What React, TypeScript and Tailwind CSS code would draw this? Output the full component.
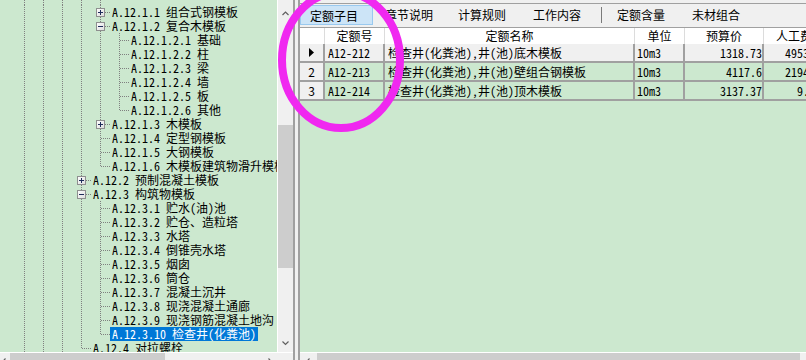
import React from "react";

const mono = "font-['Noto_Sans_Mono_CJK_SC','Noto_Sans_CJK_SC',monospace]";
const sans = "font-['Noto_Sans_CJK_SC','Microsoft_YaHei',sans-serif]";

const dotV =
  "bg-[image:repeating-linear-gradient(to_bottom,#808080_0px,#808080_1px,transparent_1px,transparent_2px)]";
const dotH =
  "bg-[image:repeating-linear-gradient(to_right,#808080_0px,#808080_1px,transparent_1px,transparent_2px)]";

type Node = {
  label: string;
  level: number;
  last?: boolean;
  box?: "+" | "-";
  selected?: boolean;
};

const nodes: Node[] = [
  { label: "A.12.1.1 组合式钢模板", level: 4, box: "+" },
  { label: "A.12.1.2 复合木模板", level: 4, box: "-" },
  { label: "A.12.1.2.1 基础", level: 5 },
  { label: "A.12.1.2.2 柱", level: 5 },
  { label: "A.12.1.2.3 梁", level: 5 },
  { label: "A.12.1.2.4 墙", level: 5 },
  { label: "A.12.1.2.5 板", level: 5 },
  { label: "A.12.1.2.6 其他", level: 5, last: true },
  { label: "A.12.1.3 木模板", level: 4, box: "+" },
  { label: "A.12.1.4 定型钢模板", level: 4 },
  { label: "A.12.1.5 大钢模板", level: 4 },
  { label: "A.12.1.6 木模板建筑物滑升模板", level: 4, last: true },
  { label: "A.12.2 预制混凝土模板", level: 3, box: "+" },
  { label: "A.12.3 构筑物模板", level: 3, box: "-" },
  { label: "A.12.3.1 贮水(油)池", level: 4 },
  { label: "A.12.3.2 贮仓、造粒塔", level: 4 },
  { label: "A.12.3.3 水塔", level: 4 },
  { label: "A.12.3.4 倒锥壳水塔", level: 4 },
  { label: "A.12.3.5 烟囱", level: 4 },
  { label: "A.12.3.6 筒仓", level: 4 },
  { label: "A.12.3.7 混凝土沉井", level: 4 },
  { label: "A.12.3.8 现浇混凝土通廊", level: 4 },
  { label: "A.12.3.9 现浇钢筋混凝土地沟", level: 4 },
  { label: "A.12.3.10 检查井(化粪池)", level: 4, last: true, selected: true },
  { label: "A.12.4 对拉螺栓", level: 3, last: true },
];

const rows = [
  { mark: "arrow", code: "A12-212", name: "检查井(化粪池),井(池)底木模板", unit: "10m3", price: "1318.73", labor: "4953.6" },
  { mark: "2", code: "A12-213", name: "检查井(化粪池),井(池)壁组合钢模板", unit: "10m3", price: "4117.6", labor: "2194.3" },
  { mark: "3", code: "A12-214", name: "检查井(化粪池),井(池)顶木模板", unit: "10m3", price: "3137.37", labor: "9.52" },
];

function ToggleBox({ sign }: { sign: "+" | "-" }) {
  return (
    <svg className="absolute left-[5px] top-[3px]" width="9" height="9" viewBox="0 0 9 9">
      <defs>
        <linearGradient id="tb" x1="0" y1="0" x2="1" y2="1">
          <stop offset="0" stopColor="#ffffff" />
          <stop offset="1" stopColor="#dcdcdc" />
        </linearGradient>
      </defs>
      <rect x="0.5" y="0.5" width="8" height="8" fill="url(#tb)" stroke="#8e8f8f" />
      <line x1="2" y1="4.5" x2="7" y2="4.5" stroke="#1e2b5a" />
      {sign === "+" && <line x1="4.5" y1="2" x2="4.5" y2="7" stroke="#1e2b5a" />}
    </svg>
  );
}

function Guides({ count }: { count: number }) {
  return (
    <>
      {Array.from({ length: count }).map((_, i) => (
        <div key={i} className="relative w-[19px] shrink-0">
          <div className={`absolute left-[9px] top-0 h-full w-px ${dotV}`} />
        </div>
      ))}
    </>
  );
}

function TreeRow({ node }: { node: Node }) {
  return (
    <div className="flex h-[14px] shrink-0">
      <div className="w-[15px] shrink-0" />
      <Guides count={node.level} />
      <div className="relative w-[19px] shrink-0">
        <div className={`absolute left-[9px] top-0 w-px ${node.last ? "h-[7px]" : "h-full"} ${dotV}`} />
        <div className={`absolute left-[10px] top-[7px] h-px w-[9px] ${dotH}`} />
        {node.box && <ToggleBox sign={node.box} />}
      </div>
      <span
        className={`whitespace-nowrap px-[2px] text-[12px] leading-[14px] ${
          node.selected ? "bg-[#0078d7] text-white" : "text-black"
        }`}
      >
        {node.label}
      </span>
    </div>
  );
}

function Chevron({ dir }: { dir: "up" | "down" | "left" | "right" }) {
  const vertical = dir === "up" || dir === "down";
  const pts = {
    up: "0.5,4 3.5,1 6.5,4",
    down: "0.5,0.5 3.5,3.5 6.5,0.5",
    left: "3.5,0.5 0.8,3.5 3.5,6.5",
    right: "0.5,0.5 3.2,3.5 0.5,6.5",
  }[dir];
  return (
    <svg width={vertical ? 7 : 4} height={vertical ? 5 : 7} className="shrink-0">
      <polyline points={pts} fill="none" stroke="#606060" strokeWidth="1.2" />
    </svg>
  );
}

function TreePanel() {
  return (
    <div className="flex w-[295px] shrink-0 flex-col border-r-2 border-[#a0a0a0]">
      <div className="flex h-[352px] shrink-0">
        <div className={`flex w-[278px] shrink-0 flex-col overflow-hidden border-r border-white bg-[#cce8cf] ${mono}`}>
          <div className="flex h-[5px] shrink-0">
            <div className="w-[15px] shrink-0" />
            <Guides count={5} />
          </div>
          {nodes.map((n) => (
            <TreeRow key={n.label} node={n} />
          ))}
        </div>
        <div className="flex w-[15px] shrink-0 flex-col items-center bg-[#f0f0f0]">
          <div className="mt-[11px]">
            <Chevron dir="up" />
          </div>
          <div className="mt-[109px] h-[143px] w-full bg-[#cdcdcd]" />
          <div className="mt-[73px]">
            <Chevron dir="down" />
          </div>
        </div>
      </div>
      <div className="flex h-[17px] shrink-0 border-t border-white bg-[#f0f0f0]">
        <div className="flex w-[278px] shrink-0 items-center">
          <div className="ml-[2px]">
            <Chevron dir="left" />
          </div>
          <div className="ml-[4px] h-full w-[155px] bg-[#cdcdcd]" />
          <div className="ml-auto mr-[6px]">
            <Chevron dir="right" />
          </div>
        </div>
      </div>
    </div>
  );
}

const tabs = ["章节说明", "计算规则", "工作内容"];

function TabBar() {
  return (
    <div className={`flex h-[24px] shrink-0 items-start border-t border-[#a0a0a0] text-[12px] text-black ${sans}`}>
      <div className="mt-[1px] h-[20px] w-[73px] shrink-0 border border-[#99c9ef] bg-[#cce4f7] pl-[9px] pt-[2px] leading-[16px]">
        定额子目
      </div>
      <div className="ml-[12px] mt-[1px] h-[20px] leading-[20px]">{tabs[0]}</div>
      <div className="ml-[25px] mt-[1px] h-[20px] leading-[20px]">{tabs[1]}</div>
      <div className="ml-[27px] mt-[1px] h-[20px] leading-[20px]">{tabs[2]}</div>
      <div className="ml-[20px] mt-[3px] h-[16px] w-px bg-[#7a7a7a]" />
      <div className="ml-[15px] mt-[1px] h-[20px] leading-[20px]">定额含量</div>
      <div className="ml-[27px] mt-[1px] h-[20px] leading-[20px]">未材组合</div>
    </div>
  );
}

function QuotaTable() {
  return (
    <div className="flex h-[325px] shrink-0 flex-col overflow-hidden border-t border-[#a0a0a0] bg-[#cce8cf]">
      <div className={`flex h-[16px] shrink-0 bg-white text-[12px] leading-[16px] text-black ${sans}`}>
        <div className="w-[25px] shrink-0 border-r border-[#dcdcdc]" />
        <div className="w-[60px] shrink-0 border-r border-[#dcdcdc] text-center">定额号</div>
        <div className="w-[250px] shrink-0 border-r border-[#dcdcdc] text-center">定额名称</div>
        <div className="w-[50px] shrink-0 border-r border-[#dcdcdc] text-center">单位</div>
        <div className="w-[79px] shrink-0 border-r border-[#dcdcdc] text-center">预算价</div>
        <div className="w-[60px] shrink-0 whitespace-nowrap text-center">人工费</div>
      </div>
      {rows.map((r, i) => {
        const bg = i === 0 ? "bg-[#f0f0f0]" : "bg-[#cce8cf]";
        return (
          <div
            key={r.code}
            className={`flex h-[19px] shrink-0 border-b-2 border-[#a0a0a0] text-[12px] leading-[17px] text-black ${mono}`}
          >
            <div className={`flex w-[25px] shrink-0 items-center justify-center border-r-2 border-[#a0a0a0] bg-[#f0f0f0] ${sans}`}>
              {r.mark === "arrow" ? (
                <svg width="5" height="9" viewBox="0 0 5 9">
                  <polygon points="0,0 5,4.5 0,9" fill="#000" />
                </svg>
              ) : (
                r.mark
              )}
            </div>
            <div className={`w-[60px] shrink-0 border-r-2 border-[#a0a0a0] pl-[3px] ${bg}`}>{r.code}</div>
            <div className={`w-[250px] shrink-0 whitespace-nowrap border-r-2 border-[#a0a0a0] pl-[3px] ${bg}`}>{r.name}</div>
            <div className={`w-[50px] shrink-0 border-r-2 border-[#a0a0a0] pl-[2px] ${bg}`}>{r.unit}</div>
            <div className={`w-[79px] shrink-0 border-r-2 border-[#a0a0a0] text-right ${bg}`}>{r.price}</div>
            <div className={`w-[60px] shrink-0 border-r-2 border-[#a0a0a0] pr-[1px] text-right ${bg}`}>{r.labor}</div>
          </div>
        );
      })}
    </div>
  );
}

function QuotaPanel() {
  return (
    <div className="flex w-[508px] shrink-0 flex-col overflow-hidden border-l-2 border-[#a0a0a0] bg-[#f0f0f0]">
      <div className="h-[3px] shrink-0" />
      <TabBar />
      <QuotaTable />
      <div className="flex h-[17px] shrink-0 items-center border-t border-white bg-[#f0f0f0]">
        <div className="ml-[6px]">
          <Chevron dir="left" />
        </div>
        <div className="ml-[7px] h-full w-[483px] bg-[#cdcdcd]" />
      </div>
    </div>
  );
}

export default function App() {
  return (
    <div className="relative flex h-[360px] w-[806px] overflow-hidden bg-[#f0f0f0]">
      <TreePanel />
      <div className="w-[3px] shrink-0" />
      <QuotaPanel />
      <svg className="pointer-events-none absolute left-0 top-0" width="806" height="360">
        <ellipse cx="341" cy="60" rx="59" ry="68" fill="none" stroke="#f028f0" strokeWidth="8" />
      </svg>
    </div>
  );
}
